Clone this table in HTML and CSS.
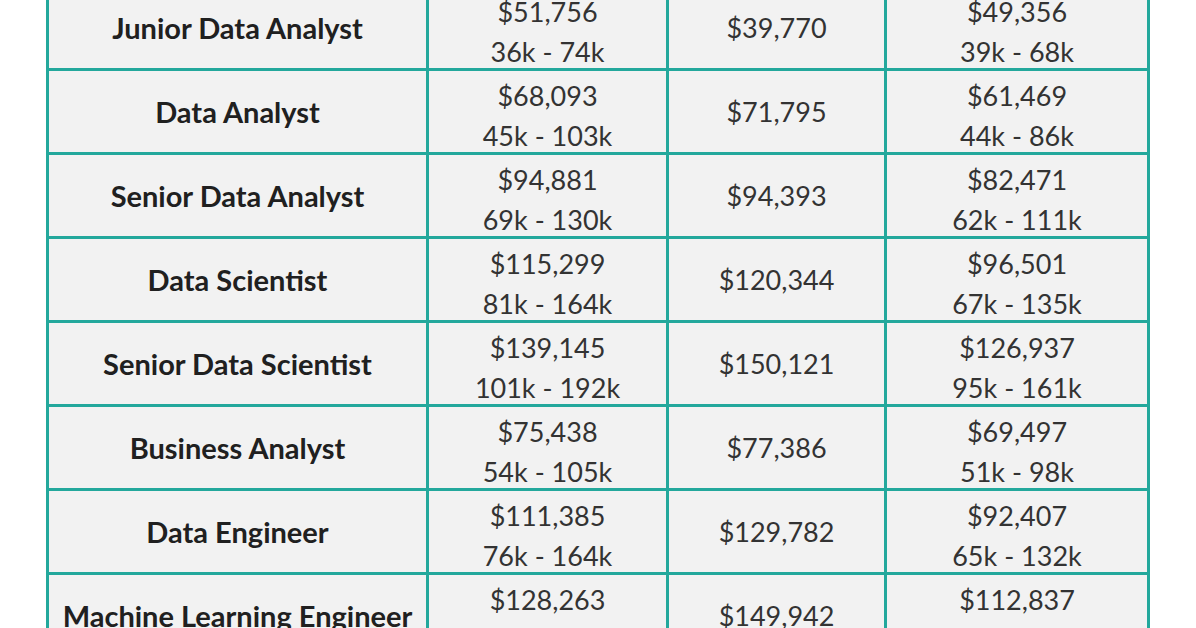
FILE: index.html
```html
<!DOCTYPE html>
<html>
<head>
<meta charset="utf-8">
<link rel="stylesheet" href="styles.css">
</head>
<body>
<div class="table">
  <div class="cell role">Junior Data Analyst</div>
  <div class="cell val two"><span>$51,756</span><span>36k - 74k</span></div>
  <div class="cell val"><span>$39,770</span></div>
  <div class="cell val two"><span>$49,356</span><span>39k - 68k</span></div>

  <div class="cell role">Data Analyst</div>
  <div class="cell val two"><span>$68,093</span><span>45k - 103k</span></div>
  <div class="cell val"><span>$71,795</span></div>
  <div class="cell val two"><span>$61,469</span><span>44k - 86k</span></div>

  <div class="cell role">Senior Data Analyst</div>
  <div class="cell val two"><span>$94,881</span><span>69k - 130k</span></div>
  <div class="cell val"><span>$94,393</span></div>
  <div class="cell val two"><span>$82,471</span><span>62k - 111k</span></div>

  <div class="cell role">Data Scientist</div>
  <div class="cell val two"><span>$115,299</span><span>81k - 164k</span></div>
  <div class="cell val"><span>$120,344</span></div>
  <div class="cell val two"><span>$96,501</span><span>67k - 135k</span></div>

  <div class="cell role">Senior Data Scientist</div>
  <div class="cell val two"><span>$139,145</span><span>101k - 192k</span></div>
  <div class="cell val"><span>$150,121</span></div>
  <div class="cell val two"><span>$126,937</span><span>95k - 161k</span></div>

  <div class="cell role">Business Analyst</div>
  <div class="cell val two"><span>$75,438</span><span>54k - 105k</span></div>
  <div class="cell val"><span>$77,386</span></div>
  <div class="cell val two"><span>$69,497</span><span>51k - 98k</span></div>

  <div class="cell role">Data Engineer</div>
  <div class="cell val two"><span>$111,385</span><span>76k - 164k</span></div>
  <div class="cell val"><span>$129,782</span></div>
  <div class="cell val two"><span>$92,407</span><span>65k - 132k</span></div>

  <div class="cell role">Machine Learning Engineer</div>
  <div class="cell val two"><span>$128,263</span><span>&nbsp;</span></div>
  <div class="cell val"><span>$149,942</span></div>
  <div class="cell val two"><span>$112,837</span><span>&nbsp;</span></div>
</div>
</body>
</html>
```
FILE: styles.css
```css
html, body {
  margin: 0;
  padding: 0;
  background: #ffffff;
  overflow: hidden;
}
body {
  font-family: "Lato", "Open Sans", sans-serif;
}
.table {
  display: grid;
  grid-template-columns: 377px 237px 215px 260px;
  grid-auto-rows: 81px;
  gap: 3px;
  padding: 3px;
  width: max-content;
  background: #23a89c;
  margin: -16px 0 0 46px;
}
.cell {
  background: #f2f2f2;
  display: flex;
  flex-direction: column;
  align-items: center;
  justify-content: center;
  text-align: center;
}
.role {
  font-weight: 700;
  font-size: 29px;
  color: #202020;
}
.val {
  font-size: 27px;
  color: #333333;
  line-height: 40px;
}
.val.two {
  padding-top: 9px;
}
.val span {
  display: block;
}
```
